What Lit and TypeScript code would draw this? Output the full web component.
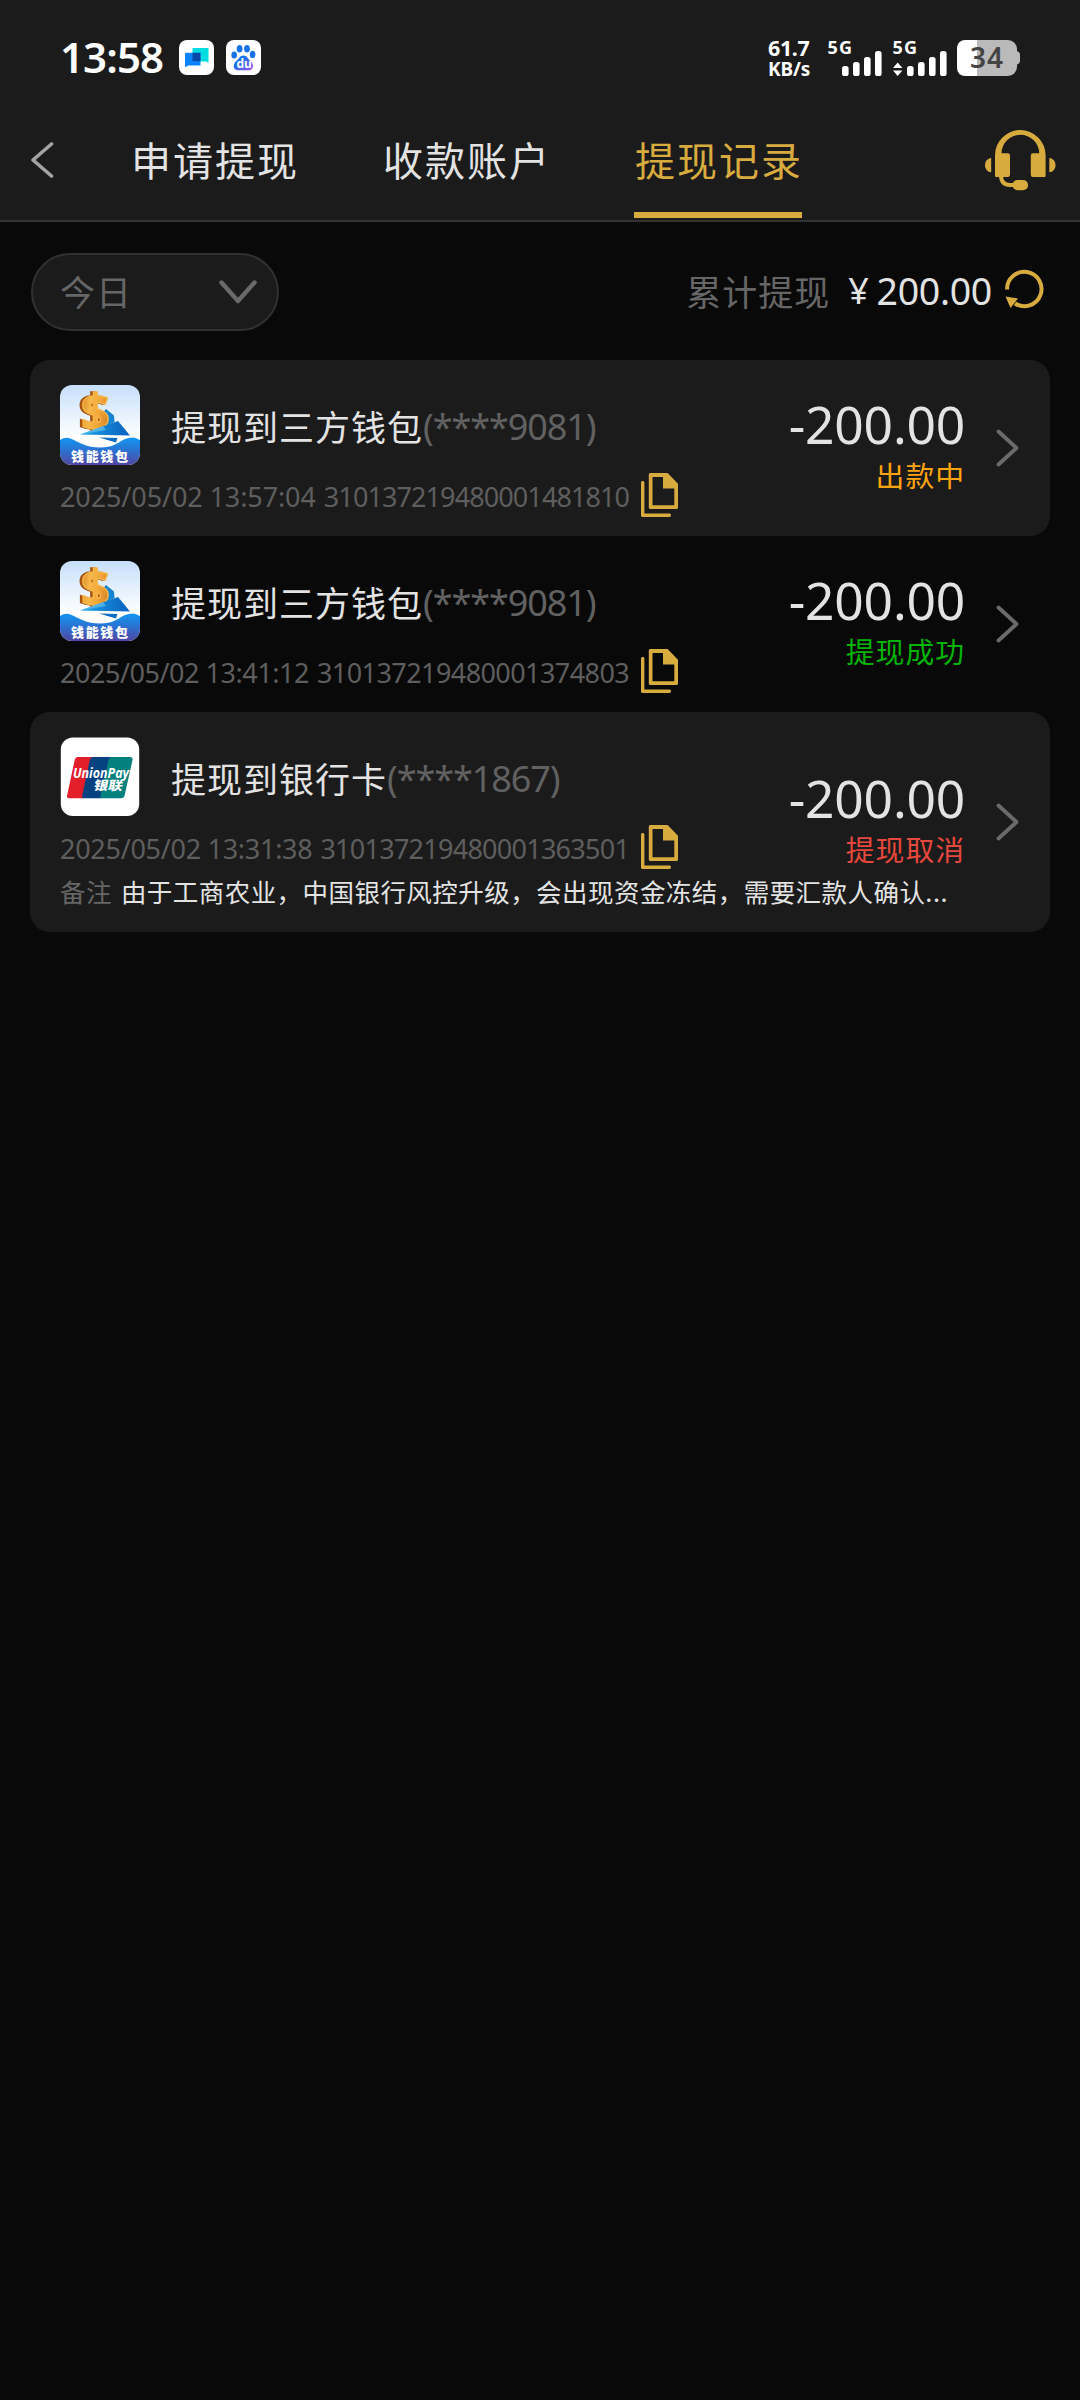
import { LitElement, html, css, svg, nothing } from "lit";
import { customElement, property } from "lit/decorators.js";
import { styleMap } from "lit/directives/style-map.js";

type Status = "pending" | "success" | "cancelled";

interface WithdrawRecord {
  logo: "wallet" | "unionpay";
  title: string;
  account: string;
  date: string;
  order: string;
  amount: string;
  status: Status;
  remark?: string;
}

const STATUS_LABEL: Record<Status, string> = {
  pending: "出款中",
  success: "提现成功",
  cancelled: "提现取消",
};

const RECORDS: WithdrawRecord[] = [
  {
    logo: "wallet",
    title: "提现到三方钱包",
    account: "(****9081)",
    date: "2025/05/02 13:57:04",
    order: "310137219480001481810",
    amount: "-200.00",
    status: "pending",
  },
  {
    logo: "wallet",
    title: "提现到三方钱包",
    account: "(****9081)",
    date: "2025/05/02 13:41:12",
    order: "310137219480001374803",
    amount: "-200.00",
    status: "success",
  },
  {
    logo: "unionpay",
    title: "提现到银行卡",
    account: "(****1867)",
    date: "2025/05/02 13:31:38",
    order: "310137219480001363501",
    amount: "-200.00",
    status: "cancelled",
    remark: "由于工商农业，中国银行风控升级，会出现资金冻结，需要汇款人确认...",
  },
];

/* The digit 1 is set narrower: spread its saving over the whole run. */
const tracking = (text: string) => {
  const ones = text.split("1").length - 1;
  return { letterSpacing: `${((1.4 - 3.4 * ones) / text.length).toFixed(3)}px` };
};

const walletLogo = html`<svg width="80" height="80" viewBox="0 0 80 80">
  <defs>
    <linearGradient id="sky" x1="0" y1="0" x2="0" y2="1">
      <stop offset="0" stop-color="#c6dffb" />
      <stop offset="0.65" stop-color="#ffffff" />
    </linearGradient>
    <linearGradient id="sea" x1="0" y1="0" x2="0" y2="1">
      <stop offset="0" stop-color="#1296f2" />
      <stop offset="0.45" stop-color="#2a74d2" />
      <stop offset="1" stop-color="#5146a4" />
    </linearGradient>
    <linearGradient id="gold" x1="0" y1="0" x2="1" y2="0.3">
      <stop offset="0" stop-color="#c9761c" />
      <stop offset="0.4" stop-color="#f7b84a" />
      <stop offset="0.7" stop-color="#f3a83a" />
      <stop offset="1" stop-color="#d98a28" />
    </linearGradient>
    <linearGradient id="wing" x1="0" y1="0" x2="1" y2="0">
      <stop offset="0" stop-color="#1aa6e6" />
      <stop offset="1" stop-color="#0a5fbe" />
    </linearGradient>
    <clipPath id="tile"><rect width="80" height="80" rx="12" /></clipPath>
  </defs>
  <g clip-path="url(#tile)">
    <rect width="80" height="80" fill="url(#sky)" />
    <path d="M46 24L54 30.5L54.5 37L40 44L30 42Z" fill="#1583cf" />
    <path d="M0 55C7 50 12 54 20 58C32 64 48 64 58 58C66 53 72 50 80 55V80H0Z" fill="url(#sea)" />
    <g font-family="'Noto Sans', sans-serif" font-weight="800" font-size="50">
      <text x="18.500" y="45" fill="#a6540f" stroke="#a6540f" stroke-width="1.5">$</text>
      <text x="21" y="44.500" fill="url(#gold)" stroke="#f6b54a" stroke-width="1.5">$</text>
    </g>
    <path d="M20 49.5L58 36L70 50.5Z" fill="url(#wing)" />
    <path d="M20 49.5L43 41L46 45Z" fill="#7fd0f5" opacity="0.55" />
    <path d="M39 52.5L57.5 53L56 57.5Z" fill="#0d6cc4" />
    <text x="11" y="76" font-family="'Noto Sans CJK SC', sans-serif" font-weight="900" font-size="13"
      textLength="57" fill="#fff">钱能钱包</text>
  </g>
</svg>`;

const unionPayLogo = html`<svg width="80" height="80" viewBox="0 0 80 80">
  <rect x="0.8" y="0.500" width="78.4" height="78.6" rx="12" fill="#fff" />
  <path d="M17.5 20H34L24 61.3H9.5Q6.4 61.3 7.1 58.5L14.8 22.5Q15.4 20 17.5 20Z" fill="#e21e2b" />
  <path d="M33.3 20H52L42 61.3H24.3Q21.6 61.3 22.2 58.5L29.9 22.5Q30.5 20 33.3 20Z" fill="#05427f" />
  <path d="M52 20H70Q73.2 20 72.5 23L64.6 58.5Q64 61.3 61 61.3H42.6Q39.9 61.3 40.5 58.5L48.6 22.5Q49.2 20 52 20Z" fill="#04807f" />
  <text x="13" y="40.5" font-family="'Open Sans', sans-serif" font-style="italic" font-weight="700"
    font-size="14" textLength="56" lengthAdjust="spacingAndGlyphs" fill="#fff">UnionPay</text>
  <text transform="translate(33 52.5) skewX(-12)" font-family="'Noto Sans CJK SC', sans-serif" font-weight="800"
    font-size="12.5" textLength="29" lengthAdjust="spacingAndGlyphs" fill="#fff">银联</text>
</svg>`;

const copyIcon = html`<svg width="37" height="44" viewBox="0 0 37 44">
  <path fill="#d8ab3f" fill-rule="evenodd"
    d="M9.4 0H26.6L37 10.8V34.4Q37 36 35.4 36H9.4Q7.8 36 7.8 34.4V1.6Q7.8 0 9.4 0ZM11.5 4V32.2H33.3V15.4H22V4Z" />
  <path fill="#d8ab3f"
    d="M0 9.2Q0 8 1.7 8Q3.4 8 3.4 9.2V40.4H28.6Q30 40.4 30 42.2Q30 44 28.6 44H1.4Q0 44 0 42.6Z" />
</svg>`;

@customElement("status-bar")
class StatusBar extends LitElement {
  static styles = css`
    :host {
      display: flex;
      align-items: flex-start;
      justify-content: space-between;
      height: 98px;
      padding: 0 60px 0 60px;
      box-sizing: border-box;
      color: #fff;
      font-family: "Noto Sans", sans-serif;
    }
    .left,
    .right {
      display: flex;
      align-items: flex-start;
    }
    .time {
      width: 119px;
      padding-top: 33px;
      font-size: 42px;
      line-height: 48px;
      font-weight: 600;
      letter-spacing: -0.9px;
    }
    .app {
      display: block;
      margin: 40px 12px 0 0;
    }
    .speed {
      display: flex;
      flex-direction: column;
      width: 59px;
      padding-top: 38px;
      font-weight: 700;
      white-space: nowrap;
    }
    .rate {
      font-size: 21.5px;
      line-height: 20px;
      letter-spacing: -0.4px;
    }
    .unit {
      font-size: 19px;
      line-height: 22px;
      letter-spacing: -0.1px;
    }
    .signals {
      display: block;
      margin-top: 30px;
    }
  `;

  private bars(x: number) {
    return [
      [0, 66],
      [11, 62],
      [22, 57],
      [33, 51],
    ].map(
      ([dx, top]) =>
        svg`<rect x=${x + dx} y=${top - 38} width="6.6" height=${76 - top} rx="2.6" fill="#fff" />`
    );
  }

  render() {
    return html`
      <div class="left">
        <span class="time">13:58</span>
        <svg class="app" width="35" height="35" viewBox="0 0 35 35">
          <rect width="35" height="35" rx="8" fill="#fff" />
          <path d="M13.5 8H29.5V22.8L27 21.5H13.5Z" fill="#00dde0" />
          <path d="M7 12.8H21.5V25.5H9.5L6 27.3V13.8Q6 12.8 7 12.8Z" fill="#0a84ff" />
          <rect x="13.5" y="12.8" width="8" height="8.4" fill="#0748a8" />
        </svg>
        <svg class="app" width="35" height="35" viewBox="0 0 35 35">
          <defs>
            <linearGradient id="paw" x1="0" y1="0" x2="1" y2="1">
              <stop offset="0.35" stop-color="#1673ea" />
              <stop offset="1" stop-color="#a44df0" />
            </linearGradient>
          </defs>
          <rect width="35" height="35" rx="8" fill="#fff" />
          <ellipse cx="8.2" cy="15" rx="2.8" ry="3.6" fill="#1673ea" />
          <ellipse cx="13.6" cy="8.8" rx="2.9" ry="3.8" fill="#1673ea" />
          <ellipse cx="21" cy="8.8" rx="2.9" ry="3.8" fill="#1673ea" />
          <ellipse cx="26.6" cy="14.4" rx="2.8" ry="3.6" fill="#1673ea" />
          <path d="M17.4 15.5C21 15.5 21.4 18.5 24 20.6C28 23.6 28.4 29.8 23.2 30.2H11.6C6.4 29.8 6.8 23.6 10.8 20.6C13.4 18.5 13.8 15.5 17.4 15.5Z" fill="url(#paw)" />
          <text x="10.4" y="28" font-family="'Noto Sans', sans-serif" font-weight="700" font-size="12" fill="#fff">du</text>
        </svg>
      </div>
      <div class="right">
        <div class="speed"><span class="rate">61.7</span><span class="unit">KB/s</span></div>
        <svg class="signals" width="193" height="48" viewBox="827 -8 193 48">
          <g font-family="'Noto Sans', sans-serif" font-weight="700" font-size="18" fill="#fff">
            <text x="827.5" y="16" textLength="24.5">5G</text>
            <text x="892.5" y="16" textLength="24.5">5G</text>
          </g>
          ${this.bars(842)} ${this.bars(907)}
          <path d="M897.7 24.5L902.4 30H893Z M897.7 38L902.4 32.4H893Z" fill="#fff" />
          <rect x="957" y="2" width="60" height="36" rx="9" fill="#bababa" />
          <path d="M977 2H966Q957 2 957 11V29Q957 38 966 38H977Z" fill="#fff" />
          <path d="M1017 13Q1020 14 1020 17V22.500Q1020 25.500 1017 26.500Z" fill="#bababa" />
          <text x="970" y="30" font-family="'Noto Sans', sans-serif" font-weight="600" font-size="28"
            textLength="33" fill="#444">34</text>
        </svg>
      </div>
    `;
  }
}

@customElement("tab-header")
class TabHeader extends LitElement {
  @property({ attribute: false }) tabs: string[] = [];
  @property({ type: Number }) active = 0;

  static styles = css`
    :host {
      display: flex;
      height: 122px;
      padding: 0 24px 0 30px;
      box-sizing: border-box;
      font-family: "Noto Sans CJK SC", sans-serif;
    }
    .back {
      display: block;
      width: 100px;
      height: 36px;
      margin-top: 44px;
    }
    .tabs {
      display: flex;
      gap: 84px;
      flex: 1;
    }
    .tab {
      display: flex;
      flex-direction: column;
      justify-content: space-between;
      width: 168px;
      padding: 31px 0 2px;
      font-size: 40px;
      line-height: 60px;
      letter-spacing: 2px;
      text-indent: 1px;
      white-space: nowrap;
      color: #e3e3e3;
    }
    .tab.active {
      color: #d8ab3f;
    }
    .line {
      height: 6px;
    }
    .active .line {
      background: #d8ab3f;
    }
    .service {
      display: block;
      margin-top: 32px;
    }
  `;

  render() {
    return html`
      <svg class="back" viewBox="0 0 100 36">
        <path d="M21.500 2L3 18L21.500 34" fill="none" stroke="#a3a3a3" stroke-width="3.600" stroke-linecap="round" stroke-linejoin="round" />
      </svg>
      <nav class="tabs">
        ${this.tabs.map(
          (t, i) => html`<div class="tab ${i === this.active ? "active" : ""}">
            <span>${t}</span>
            <div class="line"></div>
          </div>`
        )}
      </nav>
      <svg class="service" width="71" height="61" viewBox="0 0 71 61">
        <g fill="#d8ab3f">
          <path d="M10 46V25.300A25.300 25.300 0 0 1 60.600 25.300V46Q60.600 47 59.600 47H48Q45.800 47 45.800 44.800V25.500Q45.800 23.300 48 23.300H54.200A18.800 18.400 0 0 0 16.500 23.300H22.800Q25 23.300 25 25.500V44.800Q25 47 22.800 47H11Q10 47 10 46Z" />
          <path d="M6.200 28V42.300C2.500 42 0 39 0 35.200S2.500 28.400 6.200 28Z" />
          <path d="M64.300 28V42.300C68 42 70.500 39 70.500 35.200S68 28.400 64.300 28Z" />
          <rect x="27.500" y="50" width="15.600" height="10.300" rx="5.100" />
        </g>
        <path d="M16 45C16 52 19 55 25 55H30" fill="none" stroke="#d8ab3f" stroke-width="4" />
      </svg>
    `;
  }
}

@customElement("record-card")
class RecordCard extends LitElement {
  @property({ attribute: false }) record!: WithdrawRecord;

  static styles = css`
    :host {
      display: flex;
      justify-content: space-between;
      box-sizing: border-box;
      padding: 0 30px;
      font-family: "Noto Sans CJK SC", sans-serif;
    }
    .main {
      width: 640px;
      padding-top: 25px;
    }
    .head {
      display: flex;
      align-items: center;
      gap: 31px;
      height: 80px;
      white-space: nowrap;
    }
    .logo {
      display: block;
      width: 80px;
      height: 80px;
    }
    .logo svg,
    .copy svg {
      display: block;
    }
    .title {
      display: flex;
      align-items: center;
      padding-top: 1px;
      font-size: 35px;
      line-height: 54px;
      letter-spacing: 1px;
      color: #e3e3e3;
    }
    .account {
      padding-top: 2px;
      font-family: "Noto Sans", sans-serif;
      font-size: 36px;
      letter-spacing: -1.1px;
      color: #616161;
    }
    .meta {
      display: flex;
      align-items: center;
      height: 44px;
      margin-top: 8px;
      font-family: "Noto Sans", sans-serif;
      font-size: 27px;
      line-height: 44px;
      white-space: nowrap;
      color: #5e5e5e;
    }
    .date,
    .order {
      padding-top: 3px;
    }
    .order {
      margin-left: 8px;
    }
    .copy {
      margin-left: 12px;
    }
    .remark {
      width: 900px;
      font-size: 25.5px;
      line-height: 44px;
      letter-spacing: 0.45px;
      white-space: nowrap;
      color: #e3e3e3;
    }
    .label {
      margin-right: 9px;
      color: #666;
    }
    .side {
      display: flex;
      align-items: center;
    }
    .money {
      display: flex;
      flex-direction: column;
      align-items: flex-end;
      gap: 4px;
      margin-right: 31px;
      padding-bottom: 3px;
    }
    .amount {
      font-family: "Noto Sans", sans-serif;
      font-size: 51.500px;
      line-height: 52px;
      letter-spacing: -0.2px;
      color: #e3e3e3;
    }
    .status {
      font-size: 28.8px;
      line-height: 42px;
      letter-spacing: 1px;
    }
    .pending {
      color: #ffa40d;
    }
    .success {
      color: #04b304;
    }
    .cancelled {
      color: #e5483d;
    }
  `;

  render() {
    const r = this.record;
    return html`
      <div class="main">
        <div class="head">
          <span class="logo">${r.logo === "wallet" ? walletLogo : unionPayLogo}</span>
          <div class="title"><span>${r.title}</span><span class="account">${r.account}</span></div>
        </div>
        <div class="meta">
          <span class="date" style=${styleMap(tracking(r.date))}>${r.date}</span>
          <span class="order" style=${styleMap(tracking(r.order))}>${r.order}</span>
          <span class="copy">${copyIcon}</span>
        </div>
        ${r.remark
          ? html`<div class="remark"><span class="label">备注</span><span>${r.remark}</span></div>`
          : nothing}
      </div>
      <div class="side">
        <div class="money">
          <span class="amount">${r.amount}</span>
          <span class="status ${r.status}">${STATUS_LABEL[r.status]}</span>
        </div>
        <svg width="24" height="38" viewBox="0 0 24 38">
          <path d="M2.500 2.500L20.500 19L2.500 35.500" fill="none" stroke="#6a6a6a" stroke-width="3.800" stroke-linecap="round" stroke-linejoin="round" />
        </svg>
      </div>
    `;
  }
}

@customElement("app-root")
class AppRoot extends LitElement {
  static styles = css`
    :host {
      display: block;
      width: 1080px;
      min-height: 2400px;
      background: #090909;
      font-family: "Noto Sans CJK SC", sans-serif;
    }
    .top {
      background: #1b1b1b;
      border-bottom: 2px solid #323232;
    }
    .toolbar {
      display: flex;
      align-items: center;
      justify-content: space-between;
      height: 78px;
      padding: 31px 36px 29px 31px;
    }
    .filter {
      display: flex;
      align-items: center;
      justify-content: space-between;
      width: 248px;
      height: 78px;
      padding: 0 20px 2px 27px;
      box-sizing: border-box;
      border: 2px solid #313131;
      border-radius: 39px;
      background: #1b1b1b;
      color: #666;
      font-size: 35px;
      line-height: 50px;
      letter-spacing: 1px;
    }
    .arrow {
      display: block;
      margin-top: 2px;
    }
    .total {
      display: flex;
      align-items: center;
      height: 76px;
      padding-bottom: 2px;
      font-size: 35px;
      line-height: 50px;
      letter-spacing: 1px;
      color: #666;
    }
    .sum {
      display: flex;
      gap: 8px;
      margin: 0 12px 0 18px;
      font-family: "Noto Sans", sans-serif;
      font-size: 37.500px;
      letter-spacing: -0.3px;
      color: #e3e3e3;
    }
    .yen {
      font-size: 36px;
    }
    .refresh {
      display: block;
      margin-bottom: 4px;
    }
    .list {
      display: flex;
      flex-direction: column;
      padding: 0 30px;
    }
    .card {
      height: 176px;
      border-radius: 20px;
    }
    .card.tall {
      height: 220px;
    }
    .card:nth-child(odd) {
      background: #1b1b1b;
    }
  `;

  render() {
    return html`
      <header class="top">
        <status-bar></status-bar>
        <tab-header .tabs=${["申请提现", "收款账户", "提现记录"]} .active=${2}></tab-header>
      </header>
      <section class="toolbar">
        <div class="filter">
          <span>今日</span>
          <svg class="arrow" width="38" height="24" viewBox="0 0 38 24">
            <path d="M2.500 2.500L19 21L35.500 2.500" fill="none" stroke="#6a6a6a" stroke-width="4.400" stroke-linecap="round" stroke-linejoin="round" />
          </svg>
        </div>
        <div class="total">
          <span>累计提现</span>
          <span class="sum"><span class="yen">¥</span><span>200.00</span></span>
          <svg class="refresh" width="40" height="40" viewBox="0 0 40 40">
            <path d="M3.100 20.500A17.200 17.200 0 1 1 11 34.500" fill="none" stroke="#d8ab3f" stroke-width="4" />
            <path d="M1.500 27.500L14 29.500L6.500 39Z" fill="#d8ab3f" />
          </svg>
        </div>
      </section>
      <main class="list">
        ${RECORDS.map(
          (r) => html`<record-card class="card ${r.remark ? "tall" : ""}" .record=${r}></record-card>`
        )}
      </main>
    `;
  }
}
